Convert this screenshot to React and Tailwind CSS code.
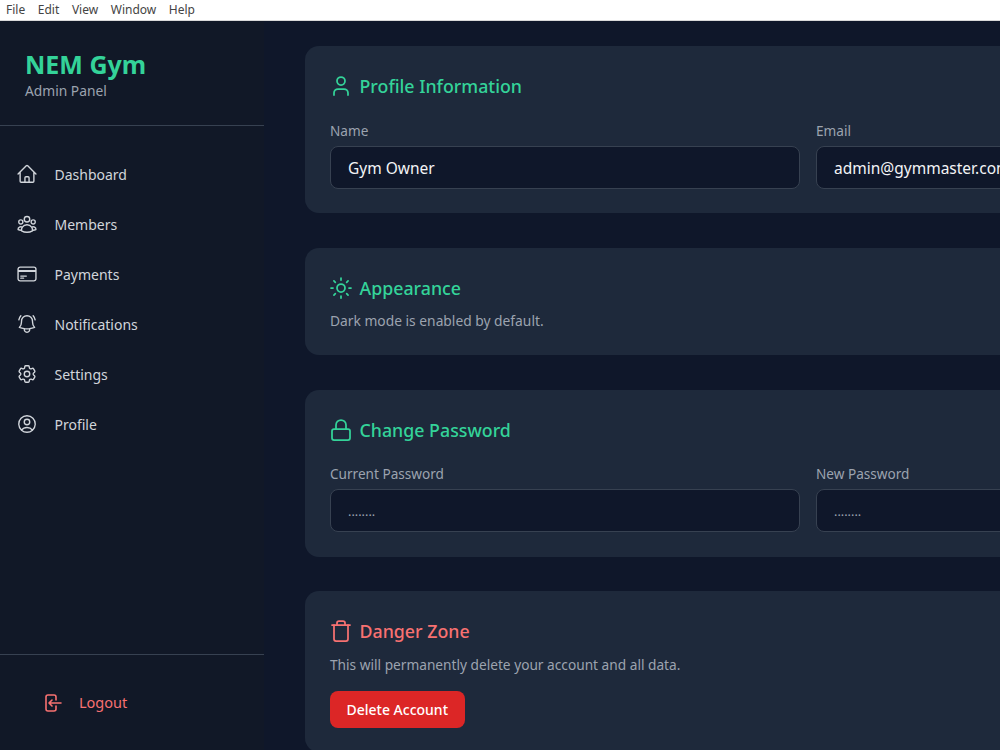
import React from "react";
import { Lock, Sun, Trash, User } from "lucide-react";
import {
  HiOutlineBellAlert,
  HiOutlineCog6Tooth,
  HiOutlineCreditCard,
  HiOutlineHome,
  HiOutlineUserCircle,
  HiOutlineUserGroup,
} from "react-icons/hi2";

const menu = ["File", "Edit", "View", "Window", "Help"];

const nav = [
  { label: "Dashboard", icon: HiOutlineHome },
  { label: "Members", icon: HiOutlineUserGroup },
  { label: "Payments", icon: HiOutlineCreditCard },
  { label: "Notifications", icon: HiOutlineBellAlert },
  { label: "Settings", icon: HiOutlineCog6Tooth },
  { label: "Profile", icon: HiOutlineUserCircle },
];

function LogoutIcon() {
  return (
    <svg viewBox="0 0 20 20" fill="none" stroke="currentColor" strokeWidth="1.6" strokeLinecap="round" strokeLinejoin="round" className="h-5 w-5 shrink-0">
      <path d="M13 7V4a2 2 0 0 0-2-2H5a2 2 0 0 0-2 2v12a2 2 0 0 0 2 2h6a2 2 0 0 0 2-2v-3" />
      <path d="M18 10H6M9 7l-3 3 3 3" />
    </svg>
  );
}

function Sidebar() {
  return (
    <aside className="flex w-[264px] shrink-0 flex-col bg-[#111827]">
      <div className="h-[105px] border-b border-[#374151] pl-[25px] pt-[26px]">
        <h1 className="text-[25px] font-bold leading-[34px] text-[#34d399]">NEM Gym</h1>
        <p className="text-[13.8px] leading-[19px] text-[#9ca3af]">Admin Panel</p>
      </div>

      <nav className="flex flex-1 flex-col pl-[16px] pt-[23px]">
        {nav.map((item) => (
          <a key={item.label} className="flex h-[50px] items-center gap-[16.5px] text-[#d1d5db]">
            <item.icon className="h-[22px] w-[22px] shrink-0" />
            <span className="text-[14px]">{item.label}</span>
          </a>
        ))}
      </nav>

      <div className="flex h-[96px] items-center gap-[16px] border-t border-[#374151] pl-[43px] text-[#f87171]">
        <LogoutIcon />
        <span className="text-[14.5px]">Logout</span>
      </div>
    </aside>
  );
}

function Card({ icon: Icon, title, danger, className, children }) {
  return (
    <section className={`rounded-[14px] bg-[#1e293b] px-[25px] pb-[24px] pt-[25px] ${className || ""}`}>
      <div className={`flex h-[30px] items-center gap-[6.5px] ${danger ? "text-[#f87171]" : "text-[#34d399]"}`}>
        <Icon className="-ml-px h-6 w-6 shrink-0" strokeWidth={1.75} />
        <h2 className="text-[17.8px] font-medium">{title}</h2>
      </div>
      {children}
    </section>
  );
}

function Field({ label, value, dim }) {
  return (
    <label className="block">
      <span className="block text-[13.6px] leading-[20px] text-[#9ca3af]">{label}</span>
      <input
        readOnly
        value={value}
        className={`mt-[5px] h-[43px] w-full rounded-[8px] border border-[#374151] bg-[#0f172a] px-[17px] pt-px outline-none ${dim ? "text-[12.7px] text-[#9ca3af]" : "text-[15.5px] text-[#f3f4f6]"}`}
      />
    </label>
  );
}

export default function App() {
  return (
    <div className="flex h-[750px] w-[1000px] flex-col overflow-hidden bg-[#0f172a] font-['Noto_Sans','Open_Sans',sans-serif]">
      <div className="flex h-[21px] shrink-0 items-center gap-[12.6px] border-b border-[#d9d9d9] bg-white pl-[6px] text-[12px] text-[#444]">
        {menu.map((m) => (
          <span key={m}>{m}</span>
        ))}
      </div>

      <div className="flex min-h-0 flex-1">
        <Sidebar />

        <main className="flex w-[1047px] shrink-0 flex-col gap-[35px] pl-[41px] pt-[25px]">
          <Card icon={User} title="Profile Information">
            <div className="mt-[20px] grid grid-cols-2 gap-[16px]">
              <Field label="Name" value="Gym Owner" />
              <Field label="Email" value="admin@gymmaster.com" />
            </div>
          </Card>

          <Card icon={Sun} title="Appearance">
            <p className="mt-[8px] text-[13.8px] leading-[20px] text-[#9ca3af]">Dark mode is enabled by default.</p>
          </Card>

          <Card icon={Lock} title="Change Password">
            <div className="mb-px mt-[19px] grid grid-cols-2 gap-[16px]">
              <Field label="Current Password" value="........" dim />
              <Field label="New Password" value="........" dim />
            </div>
          </Card>

          <Card icon={Trash} title="Danger Zone" danger className="-mt-px">
            <p className="mt-[9px] text-[13.7px] leading-[20px] text-[#9ca3af]">
              This will permanently delete your account and all data.
            </p>
            <button className="mt-[16px] h-[37px] rounded-[8px] bg-[#dc2626] px-[16.5px] text-[14px] font-medium text-white">
              Delete Account
            </button>
          </Card>
        </main>
      </div>
    </div>
  );
}
